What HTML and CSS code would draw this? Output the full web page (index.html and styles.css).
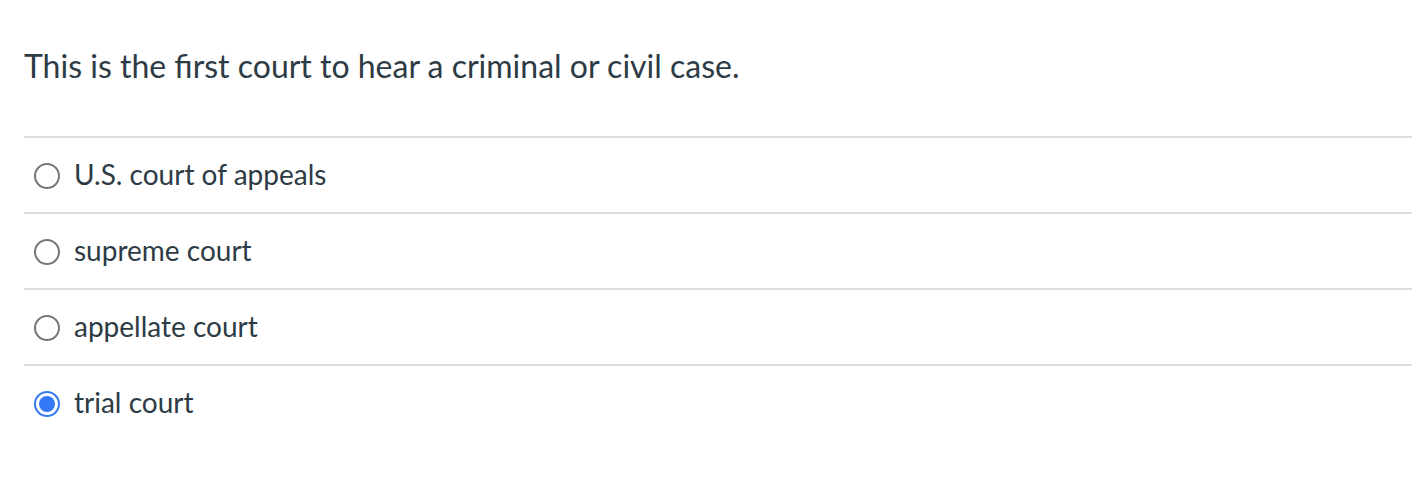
FILE: index.html
```html
<!DOCTYPE html>
<html>
<head>
<meta charset="utf-8">
<link rel="stylesheet" href="styles.css">
</head>
<body>
<div class="quiz">
  <div class="question">This is the first court to hear a criminal or civil case.</div>
  <div class="answers">
    <label class="answer"><span class="radio"></span><span class="label">U.S. court of appeals</span></label>
    <label class="answer"><span class="radio"></span><span class="label">supreme court</span></label>
    <label class="answer"><span class="radio"></span><span class="label">appellate court</span></label>
    <label class="answer last"><span class="radio checked"></span><span class="label">trial court</span></label>
  </div>
</div>
</body>
</html>
```
FILE: styles.css
```css
html, body {
  margin: 0;
  padding: 0;
  background: #ffffff;
}
.quiz {
  padding: 42px 14px 0 24px;
  font-family: Lato, "Open Sans", sans-serif;
  color: #2d3b45;
}
.question {
  font-size: 32px;
  line-height: 48px;
  padding-bottom: 46px;
  border-bottom: 2px solid #dcdcdc;
}
.answers {
  display: flex;
  flex-direction: column;
}
.answer {
  display: flex;
  align-items: center;
  height: 74px;
  border-bottom: 2px solid #dcdcdc;
  font-size: 28px;
  gap: 14px;
  padding-left: 10px;
}
.answer.last {
  border-bottom: none;
}
.radio {
  box-sizing: border-box;
  width: 26px;
  height: 26px;
  margin-top: 2px;
  border-radius: 50%;
  border: 2px solid #767676;
  background: #fff;
  flex: none;
  position: relative;
}
.radio.checked {
  border: 2.5px solid #3478f6;
}
.radio.checked::after {
  content: "";
  position: absolute;
  left: 3px;
  top: 3px;
  right: 3px;
  bottom: 3px;
  border-radius: 50%;
  background: #3478f6;
}
.label {
  line-height: 34px;
  padding-bottom: 3px;
}
```
